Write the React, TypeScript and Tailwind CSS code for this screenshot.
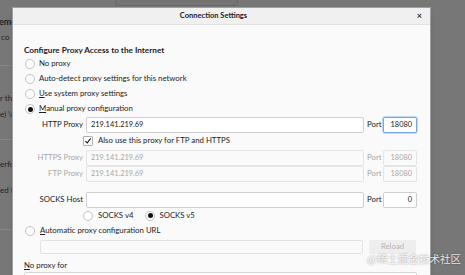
import React from "react";

function Radio({ checked = false }: { checked?: boolean }) {
  return (
    <span className="flex h-[10px] w-[10px] shrink-0 items-center justify-center rounded-full border border-[#c2c2c2] bg-white">
      {checked && <span className="h-[5px] w-[5px] rounded-full bg-[#111]" />}
    </span>
  );
}

function Check() {
  return (
    <span className="flex h-[10px] w-[10px] shrink-0 items-center justify-center rounded-[1px] border border-[#b0b0b0] bg-white">
      <svg viewBox="0 0 10 10" className="h-[8px] w-[8px]">
        <path d="M1.8 5.2 L4 7.4 L8.4 1.8" fill="none" stroke="#111" strokeWidth="1.3" />
      </svg>
    </span>
  );
}

function ProxyRow({
  label,
  value,
  port,
  disabled = false,
  focused = false,
  className = "",
}: {
  label: string;
  value: string;
  port: string;
  disabled?: boolean;
  focused?: boolean;
  className?: string;
}) {
  const text = disabled ? "text-[#a8a8a8]" : "text-[#222]";
  return (
    <div className={`flex h-[16px] items-center ${className}`}>
      <span className={`w-[62px] pr-[3px] text-right ${text}`}>{label}</span>
      <div
        className={`flex h-full w-[278px] items-center rounded-[2px] border pl-[4px] text-[7.4px] ${
          disabled ? "border-[#e4e4e4] bg-[#fafafa]" : "border-[#cfcfcf] bg-white"
        } ${text}`}
      >
        {value}
      </div>
      <span className={`ml-[3px] w-[16px] ${text}`}>Port</span>
      <div
        className={`flex h-full w-[34px] items-center justify-end rounded-[2px] border pr-[4px] text-[7.4px] ${
          focused
            ? "border-[#7aa6e0] bg-white ring-1 ring-[#c5d9f3]"
            : disabled
            ? "border-[#e4e4e4] bg-[#fafafa]"
            : "border-[#cfcfcf] bg-white"
        } ${text}`}
      >
        {port}
      </div>
    </div>
  );
}

function Dialog() {
  return (
    <div className="absolute left-[12px] top-[7px] flex h-[290px] w-[419px] flex-col border border-[#a0a0a0] bg-[#fafafa] text-[7.8px] shadow-md">
      <div className="relative flex h-[17px] shrink-0 items-center justify-center border-b border-[#e2e2e2] bg-[#f0f0f0] pr-[16px]">
        <span className="text-[7.5px] font-bold text-[#222]">Connection Settings</span>
        <span className="absolute right-[8px] top-[3px] text-[9px] font-bold leading-none text-[#333]">×</span>
      </div>

      <div className="flex flex-col pl-[11px] pr-[13px] pt-[19px] text-[#1c1c1c]">
        <div className="h-[12px] text-[8.2px] font-bold leading-[12px]">
          Configure Proxy Access to the Internet
        </div>
        <div className="mt-[0.5px] flex flex-col">
          <label className="flex h-[15px] items-center gap-[4px] pl-[1px]">
            <Radio />
            <span>No proxy</span>
          </label>
          <label className="flex h-[15px] items-center gap-[4px] pl-[1px]">
            <Radio />
            <span>Auto-detect proxy settings for this network</span>
          </label>
          <label className="flex h-[15px] items-center gap-[4px] pl-[1px]">
            <Radio />
            <span>
              <u className="decoration-[0.5px] underline-offset-1">U</u>se system proxy settings
            </span>
          </label>
          <label className="flex h-[15px] items-center gap-[4px] pl-[1px]">
            <Radio checked />
            <span>
              <u className="decoration-[0.5px] underline-offset-1">M</u>anual proxy configuration
            </span>
          </label>
        </div>

        <ProxyRow label="HTTP Proxy" value="219.141.219.69" port="18080" focused />
        <div className="flex h-[16px] items-center gap-[5px] pl-[59px]">
          <Check />
          <span>Also use this proxy for FTP and HTTPS</span>
        </div>
        <ProxyRow className="mt-[1px]" label="HTTPS Proxy" value="219.141.219.69" port="18080" disabled />
        <ProxyRow label="FTP Proxy" value="219.141.219.69" port="18080" disabled />
        <ProxyRow className="mt-[10px]" label="SOCKS Host" value="" port="0" />

        <div className="flex h-[16px] items-center pl-[59px]">
          <Radio />
          <span className="ml-[5px]">SOCKS v4</span>
          <span className="ml-[12px]">
            <Radio checked />
          </span>
          <span className="ml-[4px]">SOCKS v5</span>
        </div>
        <label className="flex h-[15px] items-center gap-[5px] pl-[1px]">
          <Radio />
          <span>
            <u className="decoration-[0.5px] underline-offset-1">A</u>utomatic proxy configuration URL
          </span>
        </label>
        <div className="mt-[1.5px] flex h-[14px] items-center">
          <div className="ml-[16px] h-full w-[323px] rounded-[2px] border border-[#e2e2e2] bg-[#fafafa]" />
          <div className="ml-[6px] flex h-full w-[47px] items-center justify-center rounded-[2px] bg-[#eeeeee] text-[#b4b4b4]">
            Reload
          </div>
        </div>
        <div className="mt-[5px] h-[12px] leading-[12px]">
          <u className="decoration-[0.5px] underline-offset-1">N</u>o proxy for
        </div>
        <div className="mt-[1px] h-[30px] rounded-[2px] border border-[#d6d6d6] bg-white" />
      </div>
    </div>
  );
}

function BackgroundPage() {
  return (
    <div className="flex w-[12px] flex-col overflow-hidden whitespace-nowrap text-[8px] text-[#1f1f1f]">
      <div className="h-[15px]" />
      <div className="ml-[-1px] text-[9px] font-bold">eme</div>
      <div className="mt-[2px] ml-[1px]">co</div>
      <div className="mt-[22px] h-px bg-[#858585]" />
      <div className="mt-[26px]">r th</div>
      <div className="mt-[4px]">
        e) <span className="text-[#2b3f6e]">V</span>
      </div>
      <div className="mt-[19px] h-px bg-[#858585]" />
      <div className="mt-[18px]">erfo</div>
      <div className="mt-[14px]">ed t</div>
      <div className="mt-[33px] h-px bg-[#858585]" />
    </div>
  );
}

export default function App() {
  return (
    <div className="relative h-[275px] w-[465px] overflow-hidden bg-[#777777] font-['Lato','Open_Sans',sans-serif]">
      <div className="absolute left-[115px] top-0 h-[6px] w-[123px] rounded-b-[2px] border border-t-0 border-[#686868] bg-[#737373]" />
      <BackgroundPage />
      <Dialog />
      <div className="absolute left-[367px] top-[252px] font-['Noto_Sans_CJK_SC',sans-serif] text-[10.5px] leading-[13px] text-white/85 [text-shadow:0_0_2px_rgba(0,0,0,0.45)]">
        @稀土掘金技术社区
      </div>
    </div>
  );
}
